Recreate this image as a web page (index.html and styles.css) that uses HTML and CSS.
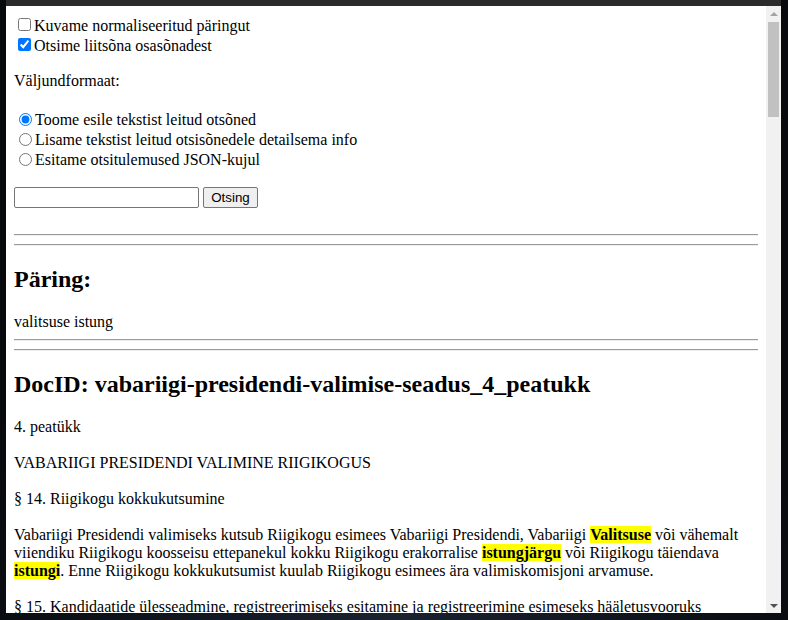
FILE: index.html
```html
<!DOCTYPE html>
<html lang="et">
<head>
<meta charset="utf-8">
<title>Otsing</title>
<link rel="stylesheet" href="styles.css">
</head>
<body>
<div class="desktop">
  <div class="window">
    <div class="viewport">
      <div class="page">
        <form class="search-form">
          <label class="opt"><input type="checkbox" class="cb"><span>Kuvame normaliseeritud päringut</span></label>
          <label class="opt"><input type="checkbox" class="cb" checked><span>Otsime liitsõna osasõnadest</span></label>
          <p class="label">Väljundformaat:</p>
          <label class="opt"><input type="radio" name="fmt" class="rb" checked><span>Toome esile tekstist leitud otsõned</span></label>
          <label class="opt"><input type="radio" name="fmt" class="rb"><span>Lisame tekstist leitud otsisõnedele detailsema info</span></label>
          <label class="opt"><input type="radio" name="fmt" class="rb"><span>Esitame otsitulemused JSON-kujul</span></label>
          <div class="search-row"><input type="text" class="query"><button type="button" class="btn">Otsing</button></div>
        </form>
        <hr class="rule"><hr class="rule">
        <h2 class="heading">Päring:</h2>
        <div class="query-text">valitsuse istung</div>
        <hr class="rule"><hr class="rule">
        <h2 class="heading">DocID: vabariigi-presidendi-valimise-seadus_4_peatukk</h2>
        <p class="text">4. peatükk</p>
        <p class="text">VABARIIGI PRESIDENDI VALIMINE RIIGIKOGUS</p>
        <p class="text">§ 14. Riigikogu kokkukutsumine</p>
        <p class="text">Vabariigi Presidendi valimiseks kutsub Riigikogu esimees Vabariigi Presidendi, Vabariigi <mark class="hl">Valitsuse</mark> või vähemalt viiendiku Riigikogu koosseisu ettepanekul kokku Riigikogu erakorralise <mark class="hl">istungjärgu</mark> või Riigikogu täiendava <mark class="hl">istungi</mark>. Enne Riigikogu kokkukutsumist kuulab Riigikogu esimees ära valimiskomisjoni arvamuse.</p>
        <p class="text">§ 15. Kandidaatide ülesseadmine, registreerimiseks esitamine ja registreerimine esimeseks hääletusvooruks</p>
      </div>
      <div class="scrollbar">
        <div class="arrow arrow-up"></div>
        <div class="track"><div class="thumb"></div></div>
        <div class="arrow arrow-down"></div>
      </div>
    </div>
  </div>
</div>
</body>
</html>
```
FILE: styles.css
```css
html, body {
  margin: 0;
  padding: 0;
  height: 100%;
}
body {
  background: #07090d;
  overflow: hidden;
}
.desktop {
  height: 620px;
  box-sizing: border-box;
  padding: 0 7px 7px 6px;
  display: flex;
  background: radial-gradient(circle at 50% 100%, #1a2230 0%, #07090d 60%);
}
.window {
  flex: 1;
  display: flex;
  flex-direction: column;
  border-top: 6px solid #2b2b2b;
}
.viewport {
  flex: 1;
  display: flex;
  min-height: 0;
  background: #fff;
}
.page {
  flex: 1;
  min-width: 0;
  overflow: hidden;
  padding: 8px;
  font-family: "Liberation Serif", "Times New Roman", serif;
  font-size: 16px;
  color: #000;
}
.search-form {
  margin: 0 0 26px;
  padding-top: 2px;
}
.opt {
  display: flex;
  align-items: flex-start;
  height: 20px;
  line-height: 20px;
  white-space: nowrap;
}
.cb {
  flex: none;
  width: 13px;
  height: 13px;
  margin: 2px 3px 0 4px;
  accent-color: #0075ff;
}
.rb {
  flex: none;
  width: 13px;
  height: 13px;
  margin: 3px 3px 0 5px;
  accent-color: #0075ff;
}
.label {
  margin: 16px 0 20px;
  line-height: 18px;
}
.search-row {
  margin-top: 17px;
  display: flex;
  align-items: center;
  gap: 4px;
  height: 21px;
}
.query {
  box-sizing: border-box;
  width: 185px;
  height: 21px;
  margin: 0;
  border: 1px solid #767676;
  border-radius: 2px;
  padding: 1px 2px;
  font-family: "Liberation Sans", Arial, sans-serif;
  font-size: 13.33px;
}
.btn {
  box-sizing: border-box;
  width: 55px;
  height: 21px;
  margin: 0;
  padding: 1px 6px;
  border: 1px solid #767676;
  border-radius: 2px;
  background: #efefef;
  color: #000;
  font-family: "Liberation Sans", Arial, sans-serif;
  font-size: 13.33px;
}
.rule {
  border: 0;
  border-top: 1px solid #9a9a9a;
  border-bottom: 1px solid #eeeeee;
  margin: 8px 0;
  height: 0;
}
.heading {
  font-size: 24px;
  font-weight: bold;
  margin: 20px 0;
  line-height: 27px;
}
.query-text {
  line-height: 18px;
}
.text {
  margin: 18px 0;
  line-height: 18px;
}
.hl {
  background: #ffff00;
  color: #000;
  font-weight: bold;
}
.scrollbar {
  width: 15px;
  flex: none;
  background: #f1f1f1;
  display: flex;
  flex-direction: column;
}
.arrow {
  height: 15px;
  flex: none;
  display: flex;
  align-items: center;
  justify-content: center;
}
.arrow-up::before {
  content: "";
  border-left: 4px solid transparent;
  border-right: 4px solid transparent;
  border-bottom: 4px solid #a3a3a3;
}
.arrow-down::before {
  content: "";
  border-left: 4px solid transparent;
  border-right: 4px solid transparent;
  border-top: 4px solid #505050;
}
.track {
  flex: 1;
  padding: 1px 2px;
}
.thumb {
  height: 95px;
  background: #c1c1c1;
}
```
